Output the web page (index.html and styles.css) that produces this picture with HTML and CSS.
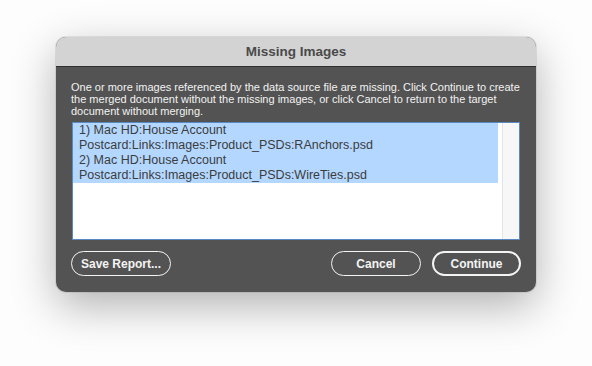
FILE: index.html
```html
<!DOCTYPE html>
<html lang="en">
<head>
    <meta charset="UTF-8">
    <title>Missing Images</title>
    <link rel="stylesheet" href="styles.css">
</head>
<body>
    <div class="dialog">
        <div class="dialog-title">Missing Images</div>
        <div class="dialog-body">
            <p class="message">One or more images referenced by the data source file are missing. Click Continue to create the merged document without the missing images, or click Cancel to return to the target document without merging.</p>
            <div class="file-list">
                <div class="file-lines">
                    <div class="selection">
                        <div>1) Mac HD:House Account</div>
                        <div>Postcard:Links:Images:Product_PSDs:RAnchors.psd</div>
                        <div>2) Mac HD:House Account</div>
                        <div>Postcard:Links:Images:Product_PSDs:WireTies.psd</div>
                    </div>
                </div>
                <div class="scroll-track"></div>
            </div>
            <div class="buttons">
                <button class="btn btn-save">Save Report...</button>
                <div class="spacer"></div>
                <button class="btn btn-cancel">Cancel</button>
                <button class="btn btn-default">Continue</button>
            </div>
        </div>
    </div>
</body>
</html>
```

FILE: styles.css
```css
html, body {
    height: 100%;
}

body {
    margin: 0;
    background-color: #fdfdfd;
    font-family: "Liberation Sans", Arial, sans-serif;
    overflow: hidden;
}

.dialog {
    width: 480px;
    height: 255px;
    margin: 37px 0 0 56px;
    border-radius: 10px;
    overflow: hidden;
    background-color: #535353;
    box-shadow: 0 14px 44px rgba(0, 0, 0, 0.3), 0 0 0 1px rgba(0, 0, 0, 0.08);
    display: flex;
    flex-direction: column;
}

.dialog-title {
    height: 29px;
    line-height: 29px;
    background-color: #d3d3d3;
    border-bottom: 1px solid #2e2e2e;
    color: #4a4a4a;
    font-size: 13.5px;
    font-weight: bold;
    text-align: center;
}

.dialog-body {
    flex: 1;
    padding: 14px 15px 16px 15px;
    display: flex;
    flex-direction: column;
}

.message {
    margin: 0;
    color: #f2f2f2;
    font-size: 11px;
    line-height: 12px;
}

.file-list {
    margin: 5px 1px 0 1px;
    height: 116px;
    border: 1px solid #5a88c0;
    background-color: #fff;
    display: flex;
}

.file-lines {
    flex: 1;
}

.selection {
    width: 425px;
    padding-left: 6px;
    box-sizing: border-box;
    background-color: #b3d7ff;
    color: #3c3c3c;
    font-size: 12.5px;
    line-height: 15px;
}

.scroll-track {
    width: 16px;
    background-color: #f7f7f7;
    border-left: 1px solid #e4e4e4;
}

.buttons {
    margin-top: 11px;
    display: flex;
    gap: 11px;
}

.spacer {
    flex: 1;
}

.btn {
    height: 25px;
    border: 1.5px solid #f4f4f4;
    border-radius: 13px;
    background: transparent;
    color: #f4f4f4;
    font-family: "Liberation Sans", Arial, sans-serif;
    font-size: 12px;
    font-weight: bold;
    padding: 0;
}

.btn-save {
    width: 100px;
}

.btn-cancel {
    width: 90px;
}

.btn-default {
    width: 89px;
    border-width: 2px;
}
```
